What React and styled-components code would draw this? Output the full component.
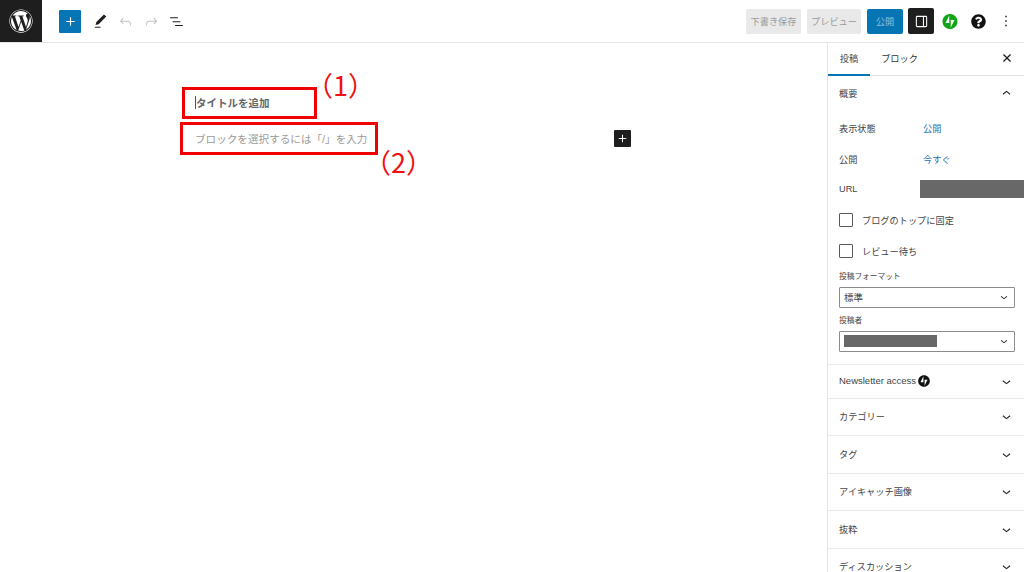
import React from 'react';
import styled, { createGlobalStyle } from 'styled-components';
import { FaWordpress, FaQuestionCircle } from 'react-icons/fa';

const GlobalStyle = createGlobalStyle`
  html, body { margin: 0; padding: 0; height: 100%; background: #fff; overflow: hidden; }
  body { font-family: "Liberation Sans", "Noto Sans CJK JP", sans-serif; color: #1e1e1e; }
  * { box-sizing: border-box; }
`;

const paths = {
  plus: 'M18 11.2h-5.2V6h-1.6v5.2H6v1.6h5.2V18h1.6v-5.2H18z',
  pen: 'M20.1 5.1L16.9 2 6.2 12.7l-1.3 4.4 4.5-1.3L20.1 5.1zM4 20.8h8v-1.5H4v1.5z',
  undo: 'M18.3 11.7c-.6-.6-1.4-.9-2.3-.9H6.7l2.9-3.3-1.1-1-4.5 5L8.5 16l1-1-2.7-2.7H16c.5 0 .9.2 1.3.5 1 1 1 3.4 1 4.5v.3h1.5v-.2c0-1.5 0-4.3-1.5-5.7z',
  redo: 'M15.6 6.5l-1.1 1 2.9 3.3H8c-.9 0-1.7.3-2.3.9-1.4 1.5-1.4 4.2-1.4 5.6v.2h1.5v-.3c0-1.1 0-3.5 1-4.5.3-.3.7-.5 1.3-.5h9.2L14.5 15l1.1 1.1 4.6-4.6-4.6-5z',
  list: 'M3 6h11v1.5H3V6zm3.5 5.5h11V13h-11v-1.5zM21 17H10v1.5h11V17z',
  down: 'M17.5 11.6L12 16l-5.5-4.4.9-1.2L12 14l4.5-3.6 1 1.2z',
  up: 'M6.5 12.4L12 8l5.5 4.4-.9 1.2L12 10l-4.5 3.6-1-1.2z',
  close: 'M12 13.06l3.712 3.713 1.061-1.06L13.061 12l3.712-3.712-1.06-1.06L12 10.938 8.288 7.227l-1.061 1.06L10.939 12l-3.712 3.712 1.06 1.061L12 13.061z',
  dots: 'M13 19h-2v-2h2v2zm0-6h-2v-2h2v2zm0-6h-2V5h2v2z',
  panel: 'M18 4H6c-1.1 0-2 .9-2 2v12c0 1.1.9 2 2 2h12c1.1 0 2-.9 2-2V6c0-1.1-.9-2-2-2zM6 18.5c-.3 0-.5-.2-.5-.5V6c0-.3.2-.5.5-.5h8v13H6zm12.5-.5c0 .3-.2.5-.5.5h-2.5v-13H18c.3 0 .5.2.5.5v12z',
  jetpack: 'M12 2C6.5 2 2 6.5 2 12s4.5 10 10 10 10-4.5 10-10S17.5 2 12 2zm-1 12H6l5-10v10zm2 6V10h5l-5 10z',
};

const Icon = ({ name, size = 17, color = '#1e1e1e' }) => (
  <svg width={size} height={size} viewBox="0 0 24 24" fill={color}>
    <path d={paths[name]} fillRule="evenodd" />
  </svg>
);

const Page = styled.div`
  width: 1024px;
  height: 572px;
  display: flex;
  flex-direction: column;
  overflow: hidden;
`;

const Header = styled.header`
  height: 43px;
  flex: none;
  display: flex;
  align-items: center;
  border-bottom: 1px solid #e4e4e4;
`;

const LogoBox = styled.div`
  width: 42px;
  height: 42px;
  background: #1e1e1e;
  color: #fff;
  display: flex;
  align-items: center;
  justify-content: center;
  font-size: 24px;
`;

const LeftTools = styled.div`
  display: flex;
  align-items: center;
  margin-left: 17px;
`;

const Inserter = styled.div`
  width: 22px;
  height: 23px;
  border-radius: 1px;
  background: #0675b4;
  display: flex;
  align-items: center;
  justify-content: center;
  margin-right: 7px;
`;

const ToolIcon = styled.div`
  width: 25.3px;
  display: flex;
  justify-content: center;
`;

const RightTools = styled.div`
  margin-left: auto;
  display: flex;
  align-items: center;
`;

const TextButton = styled.div`
  height: 25px;
  width: ${p => p.$w}px;
  margin-right: ${p => p.$mr || 6}px;
  border-radius: 2px;
  background: ${p => (p.$primary ? '#0675b4' : '#e9e9e9')};
  color: ${p => (p.$primary ? '#8fc0dc' : '#9a9a9a')};
  font-size: 9.2px;
  display: flex;
  align-items: center;
  justify-content: center;
  white-space: nowrap;
`;

const PanelToggle = styled.div`
  width: 26px;
  height: 26px;
  border-radius: 2px;
  background: #1e1e1e;
  display: flex;
  align-items: center;
  justify-content: center;
  margin-right: 7px;
`;

const RoundIcon = styled.div`
  width: 18px;
  height: 18px;
  margin-right: ${p => p.$mr}px;
  display: flex;
  align-items: center;
  justify-content: center;
  color: #111;
  font-size: 15px;
`;

const Body = styled.div`
  flex: 1;
  display: flex;
  min-height: 0;
`;

const Canvas = styled.main`
  flex: 1;
  position: relative;
  padding: 50px 0 0 195px;
`;

const TitleLine = styled.div`
  height: 18px;
  display: flex;
  align-items: center;
  font-size: 10.5px;
  font-weight: 700;
  color: #666;
`;

const Caret = styled.span`
  width: 1px;
  height: 13px;
  background: #555;
`;

const BlockRow = styled.div`
  width: 436px;
  height: 17px;
  margin-top: 19px;
  display: flex;
  align-items: center;
  justify-content: space-between;
`;

const Placeholder = styled.div`
  font-size: 10.6px;
  color: #9a9a9a;
`;

const BlockPlus = styled.div`
  width: 17px;
  height: 17px;
  background: #1e1e1e;
  border-radius: 1px;
  display: flex;
  align-items: center;
  justify-content: center;
`;

const RedBox = styled.div`
  position: absolute;
  left: ${p => p.$x}px;
  top: ${p => p.$y}px;
  width: ${p => p.$w}px;
  height: ${p => p.$h}px;
  border: 3px solid #f00000;
`;

const RedNote = styled.div`
  position: absolute;
  left: ${p => p.$x}px;
  top: ${p => p.$y}px;
  color: #f01010;
  font-size: 27px;
  line-height: 30px;
  white-space: nowrap;
  font-family: "Noto Sans CJK JP", sans-serif;
`;

const Sidebar = styled.aside`
  width: 197px;
  flex: none;
  border-left: 1px solid #e4e4e4;
  font-size: 9.2px;
  color: #444;
`;

const Tabs = styled.div`
  height: 33px;
  display: flex;
  align-items: stretch;
  border-bottom: 1px solid #e0e0e0;
  padding-right: 7px;
`;

const Tab = styled.div`
  width: ${p => p.$w}px;
  display: flex;
  align-items: center;
  justify-content: center;
  padding-bottom: 3px;
  color: ${p => (p.$active ? '#444' : '#333')};
  box-shadow: ${p => (p.$active ? 'inset 0 -2px 0 #0675b4' : 'none')};
  margin-bottom: -1px;
`;

const TabClose = styled.div`
  margin-left: auto;
  padding-bottom: 3px;
  display: flex;
  align-items: center;
`;

const Summary = styled.section`
  padding: 0 0 12px 11px;
  border-bottom: 1px solid #e9e9e9;
`;

const SectionHead = styled.div`
  height: 36px;
  padding: 0 9px 2px 0;
  display: flex;
  align-items: center;
  justify-content: space-between;
  margin-bottom: 1px;
`;

const InfoRow = styled.div`
  height: 30.5px;
  display: flex;
  align-items: center;
`;

const InfoLabel = styled.div`
  width: 81px;
  flex: none;
`;

const InfoValue = styled.div`
  padding-left: 3px;
  color: #2271b1;
`;

const HiddenValue = styled.div`
  flex: 1;
  height: 18px;
  background: #686868;
`;

const CheckRow = styled.div`
  height: 31px;
  display: flex;
  align-items: center;
  gap: 9px;
  &:first-of-type { margin-top: 5px; }
`;

const CheckBox = styled.div`
  width: 14px;
  height: 14px;
  border: 1px solid #5a5a5a;
  border-radius: 1px;
`;

const FieldLabel = styled.div`
  height: 14px;
  margin-top: ${p => p.$mt}px;
  font-size: 7.7px;
  line-height: 18px;
`;

const SelectBox = styled.div`
  width: 176px;
  height: 21px;
  margin-top: 5px;
  padding: 0 3px 0 4px;
  border: 1px solid #8c8c8c;
  border-radius: 1px;
  display: flex;
  align-items: center;
  justify-content: space-between;
  font-size: 9.5px;
`;

const HiddenAuthor = styled.div`
  width: 93px;
  height: 12px;
  background: #686868;
`;

const Panel = styled.section`
  height: ${p => p.$h}px;
  flex: none;
  display: flex;
  align-items: center;
  padding: 0 9px 0 11px;
  border-bottom: 1px solid #e9e9e9;
`;

const PanelTitle = styled.div`
  flex: 1;
  display: flex;
  align-items: center;
  gap: 1px;
  padding-bottom: 1px;
  font-size: ${p => (p.$latin ? '9.5px' : 'inherit')};
`;

const panels = [
  ['カテゴリー', 37],
  ['タグ', 38],
  ['アイキャッチ画像', 37],
  ['抜粋', 38],
  ['ディスカッション', 37],
];

export default function App() {
  return (
    <Page>
      <GlobalStyle />
      <Header>
        <LogoBox><FaWordpress /></LogoBox>
        <LeftTools>
          <Inserter><Icon name="plus" color="#fff" /></Inserter>
          <ToolIcon><Icon name="pen" /></ToolIcon>
          <ToolIcon><Icon name="undo" color="#c4c4c4" /></ToolIcon>
          <ToolIcon><Icon name="redo" color="#c4c4c4" /></ToolIcon>
          <ToolIcon><Icon name="list" /></ToolIcon>
        </LeftTools>
        <RightTools>
          <TextButton $w={55}>下書き保存</TextButton>
          <TextButton $w={54}>プレビュー</TextButton>
          <TextButton $w={36} $mr={5} $primary>公開</TextButton>
          <PanelToggle><Icon name="panel" color="#fff" /></PanelToggle>
          <RoundIcon $mr={10}><Icon name="jetpack" size={19} color="#0fa514" /></RoundIcon>
          <RoundIcon $mr={10}><FaQuestionCircle /></RoundIcon>
          <RoundIcon $mr={9}><Icon name="dots" size={20} /></RoundIcon>
        </RightTools>
      </Header>
      <Body>
        <Canvas>
          <TitleLine><Caret />タイトルを追加</TitleLine>
          <BlockRow>
            <Placeholder>ブロックを選択するには「/」を入力</Placeholder>
            <BlockPlus><Icon name="plus" size={15} color="#fff" /></BlockPlus>
          </BlockRow>
          <RedBox $x={182} $y={44} $w={135} $h={32} />
          <RedBox $x={180} $y={79} $w={198} $h={33} />
          <RedNote $x={306} $y={27}>（1）</RedNote>
          <RedNote $x={364} $y={104}>（2）</RedNote>
        </Canvas>
        <Sidebar>
          <Tabs>
            <Tab $w={42} $active>投稿</Tab>
            <Tab $w={59}>ブロック</Tab>
            <TabClose><Icon name="close" size={20} /></TabClose>
          </Tabs>
          <Summary>
            <SectionHead>概要<Icon name="up" /></SectionHead>
            <InfoRow><InfoLabel>表示状態</InfoLabel><InfoValue>公開</InfoValue></InfoRow>
            <InfoRow><InfoLabel>公開</InfoLabel><InfoValue>今すぐ</InfoValue></InfoRow>
            <InfoRow><InfoLabel>URL</InfoLabel><HiddenValue /></InfoRow>
            <CheckRow><CheckBox />ブログのトップに固定</CheckRow>
            <CheckRow><CheckBox />レビュー待ち</CheckRow>
            <FieldLabel $mt={1}>投稿フォーマット</FieldLabel>
            <SelectBox>標準<Icon name="down" size={14} /></SelectBox>
            <FieldLabel $mt={4}>投稿者</FieldLabel>
            <SelectBox><HiddenAuthor /><Icon name="down" size={14} /></SelectBox>
          </Summary>
          <Panel $h={34}>
            <PanelTitle $latin>
              Newsletter access
              <Icon name="jetpack" size={14} color="#111" />
            </PanelTitle>
            <Icon name="down" />
          </Panel>
          {panels.map(([title, h]) => (
            <Panel key={title} $h={h}>
              <PanelTitle>{title}</PanelTitle>
              <Icon name="down" />
            </Panel>
          ))}
        </Sidebar>
      </Body>
    </Page>
  );
}
